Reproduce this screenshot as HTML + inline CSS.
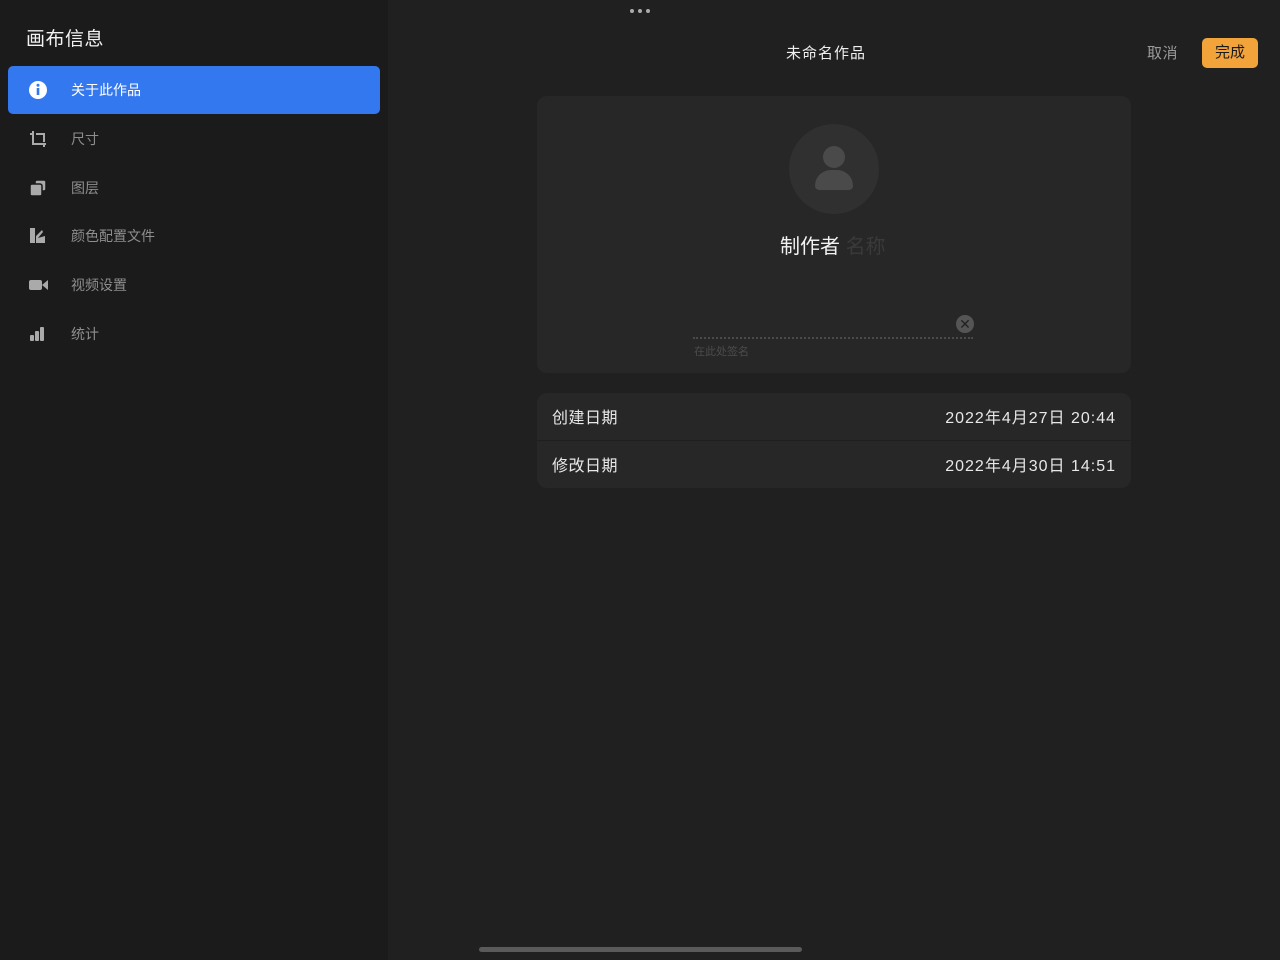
<!DOCTYPE html>
<html><head><meta charset="utf-8"><style>
*{margin:0;padding:0;box-sizing:border-box}
body{width:1280px;height:960px;background:#202020;font-family:"Liberation Sans","Noto Sans CJK SC",sans-serif;position:relative;overflow:hidden;color:#fff}
.side{position:absolute;left:0;top:0;width:388px;height:960px;background:#1b1b1b}
.t{position:absolute}
.item{position:absolute;left:8px;width:372px;height:48px;font-size:14px;color:#8e8e8e}
.item span{position:absolute;left:63px;top:14px}
.item svg{position:absolute;left:20px;top:14px}
</style></head><body>
<div class="side">
<div class="t" style="left:26px;top:24px;font-size:19px;color:#f2f2f2;letter-spacing:0.5px">画布信息</div>
<div class="item" style="top:66px;background:#3478f0;border-radius:5px;color:#fff"><svg width="20" height="20" viewBox="0 0 20 20"><circle cx="10" cy="10" r="9" fill="#fff"/><rect x="8.7" y="8" width="2.6" height="7" fill="#3478f0"/><circle cx="10" cy="5.3" r="1.5" fill="#3478f0"/></svg><span>关于此作品</span></div>
<div class="item" style="top:115px"><svg width="20" height="20" viewBox="0 0 20 20" fill="none" stroke="#aaa" stroke-width="2"><path d="M5 2v13h13M2 5h3M8 5h8v8M16 15v3"/></svg><span>尺寸</span></div>
<div class="item" style="top:164px"><svg width="20" height="20" viewBox="0 0 20 20"><rect x="7" y="2" width="11" height="11" rx="2" fill="#aaa" stroke="#1b1b1b" stroke-width="1.5"/><rect x="2" y="6" width="12" height="12" rx="2" fill="#aaa" stroke="#1b1b1b" stroke-width="1.5"/></svg><span>图层</span></div>
<div class="item" style="top:212px"><svg width="20" height="20" viewBox="0 0 20 20" fill="#aaa"><rect x="2" y="2" width="5" height="15"/><path d="M8 17L8 10L14 4L15 6L10 12L17 10L17 17Z"/></svg><span>颜色配置文件</span></div>
<div class="item" style="top:261px"><svg width="22" height="20" viewBox="0 0 22 20" fill="#aaa"><rect x="1" y="5" width="13" height="10" rx="2"/><path d="M14 10L20 5V15Z"/></svg><span>视频设置</span></div>
<div class="item" style="top:310px"><svg width="20" height="20" viewBox="0 0 20 20" fill="#aaa"><rect x="2" y="11" width="4" height="6" rx="1"/><rect x="7" y="7" width="4" height="10" rx="1"/><rect x="12" y="3" width="4" height="14" rx="1"/></svg><span>统计</span></div>
</div>
<div class="t" style="left:630px;top:9px;width:4px;height:4px;border-radius:50%;background:#aaa"></div>
<div class="t" style="left:638px;top:9px;width:4px;height:4px;border-radius:50%;background:#aaa"></div>
<div class="t" style="left:646px;top:9px;width:4px;height:4px;border-radius:50%;background:#aaa"></div>
<div class="t" style="left:786px;top:42px;font-size:15px;color:#f0f0f0;letter-spacing:1px">未命名作品</div>
<div class="t" style="left:1147px;top:42px;font-size:15px;color:#9a9a9a;letter-spacing:0.5px">取消</div>
<div class="t" style="left:1202px;top:38px;width:56px;height:30px;background:#f2a33a;border-radius:5px;color:#1a1a1a;font-size:15px;text-align:center;line-height:30px">完成</div>
<div class="t" style="left:537px;top:96px;width:594px;height:277px;background:#272727;border-radius:10px"></div>
<div class="t" style="left:789px;top:124px;width:90px;height:90px;border-radius:50%;background:#303030"></div>
<div class="t" style="left:823px;top:146px;width:22px;height:22px;border-radius:50%;background:#4a4a4a"></div>
<div class="t" style="left:815px;top:170px;width:38px;height:20px;border-radius:19px 19px 5px 5px;background:#4a4a4a"></div>
<div class="t" style="left:780px;top:230px;font-size:20px;color:#f2f2f2">制作者 <span style="color:#3a3a3a">名称</span></div>
<div class="t" style="left:693px;top:337px;width:280px;border-top:2px dotted #4a4a4a"></div>
<div class="t" style="left:956px;top:315px;width:18px;height:18px;border-radius:50%;background:#555;color:#222;font-size:14px;text-align:center;line-height:18px">✕</div>
<div class="t" style="left:694px;top:343px;font-size:11px;color:#4c4c4c">在此处签名</div>
<div class="t" style="left:537px;top:393px;width:594px;height:95px;background:#272727;border-radius:10px"></div>
<div class="t" style="left:537px;top:440px;width:594px;height:1px;background:#1f1f1f"></div>
<div class="t" style="left:552px;top:404px;font-size:16px;color:#e8e8e8;letter-spacing:0.5px">创建日期</div>
<div class="t" style="right:164px;top:404px;font-size:16px;color:#e8e8e8;letter-spacing:1px">2022年4月27日 20:44</div>
<div class="t" style="left:552px;top:452px;font-size:16px;color:#e8e8e8;letter-spacing:0.5px">修改日期</div>
<div class="t" style="right:164px;top:452px;font-size:16px;color:#e8e8e8;letter-spacing:1px">2022年4月30日 14:51</div>
<div class="t" style="left:479px;top:947px;width:323px;height:5px;border-radius:3px;background:#5a5a5a"></div>
</body></html>
